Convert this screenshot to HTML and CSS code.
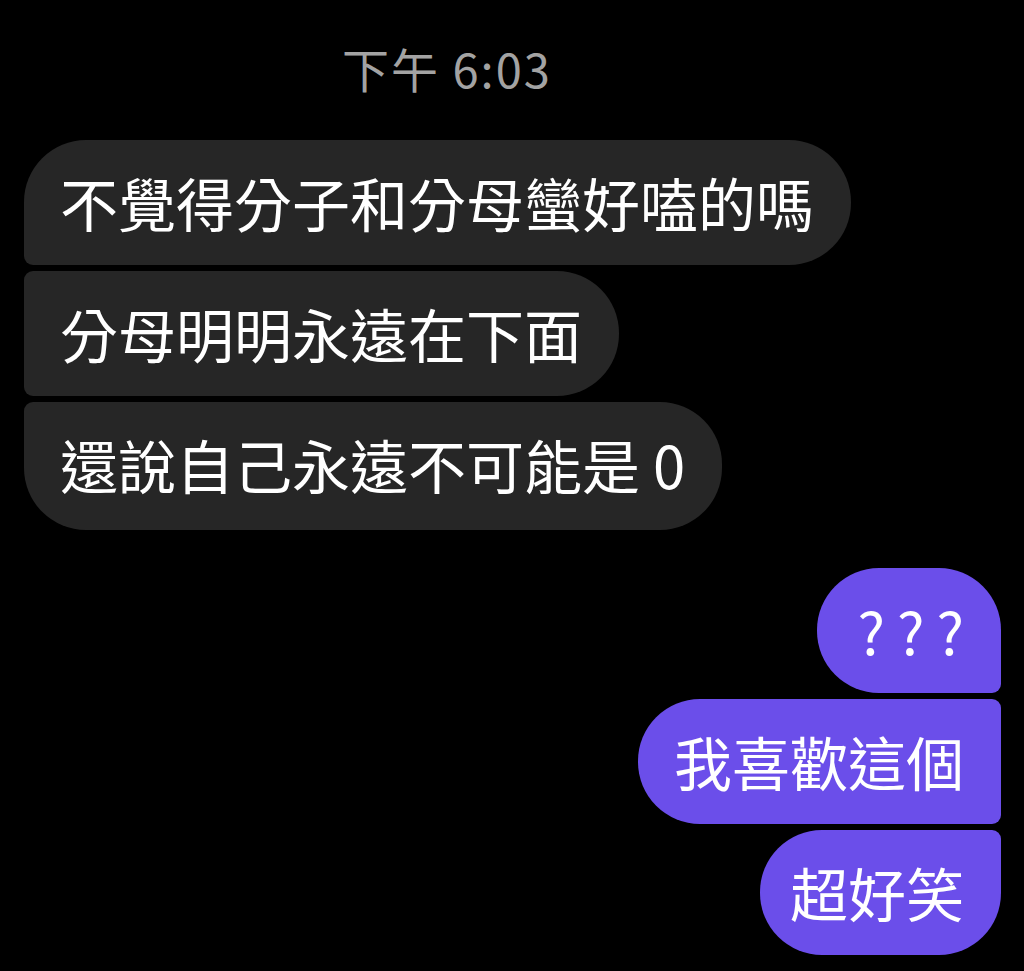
FILE: index.html
```html
<!DOCTYPE html>
<html lang="zh-Hant">

<head>
    <meta charset="UTF-8">
    <meta name="viewport" content="width=device-width, initial-scale=1.0">
    <title>Chat</title>
    <link rel="stylesheet" href="styles.css">
</head>

<body>
    <div id="chat">
        <div class="time">下午 6:03</div>

        <div class="group in">
            <div class="bubble first">不覺得分子和分母蠻好嗑的嗎</div>
            <div class="bubble middle">分母明明永遠在下面</div>
            <div class="bubble last">還說自己永遠不可能是 0</div>
        </div>

        <div class="group out">
            <div class="bubble first q">???</div>
            <div class="bubble middle">我喜歡這個</div>
            <div class="bubble last">超好笑</div>
        </div>
    </div>
</body>

</html>
```

FILE: styles.css
```css
html,
body {
    margin: 0;
    padding: 0;
    background-color: #000;
}

#chat {
    width: 1024px;
    height: 971px;
    box-sizing: border-box;
    padding: 37px 23px 0 24px;
    font-family: "Noto Sans CJK TC", "Noto Sans", sans-serif;
    color: #fff;
    overflow: hidden;
}

#chat>.time {
    padding-left: 318px;
    font-size: 47px;
    line-height: 62px;
    letter-spacing: 2px;
    color: #a3a3a3;
    margin-bottom: 41px;
}

#chat>.group {
    display: flex;
    flex-direction: column;
    gap: 6px;
}

#chat>.in {
    align-items: flex-start;
}

#chat>.out {
    align-items: flex-end;
    margin-top: 38px;
    gap: 6px;
}

.bubble {
    font-size: 58px;
    line-height: 67px;
    padding: 29px 37px 29px 36px;
    border-radius: 62px;
}

/* 左边灰色气泡 */
.in>.bubble {
    background-color: #262626;
}

.in>.first {
    border-bottom-left-radius: 9px;
}

.in>.middle {
    border-top-left-radius: 9px;
    border-bottom-left-radius: 9px;
}

.in>.last {
    border-top-left-radius: 9px;
    padding-bottom: 32px;
}

/* 右边紫色气泡 */
.out>.bubble {
    background-color: #6b4eea;
}

.out>.first {
    border-bottom-right-radius: 9px;
}

.out>.middle {
    border-top-right-radius: 9px;
    border-bottom-right-radius: 9px;
}

.out>.last {
    border-top-right-radius: 9px;
    padding-left: 30px;
}

.out>.q {
    letter-spacing: 12px;
    padding-left: 41px;
    padding-right: 25px;
}
```
